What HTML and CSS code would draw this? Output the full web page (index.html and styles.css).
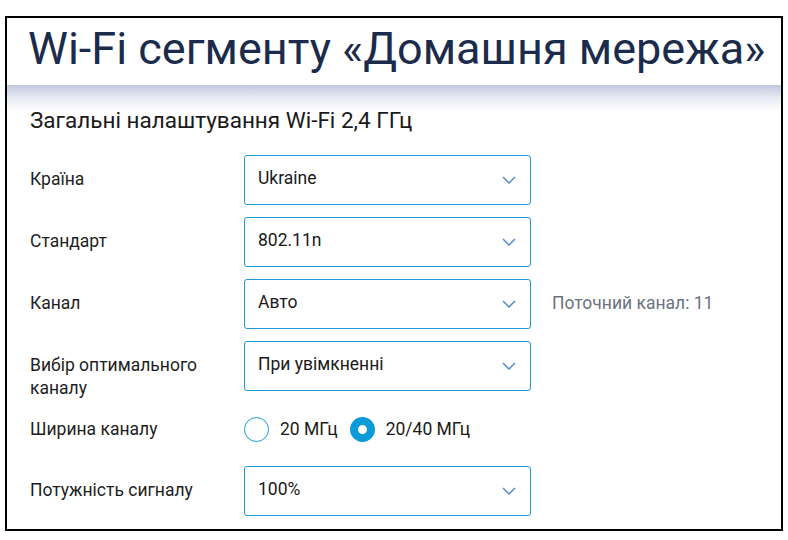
FILE: index.html
```html
<!DOCTYPE html>
<html lang="uk">
<head>
    <meta charset="UTF-8">
    <title>Wi-Fi сегменту «Домашня мережа»</title>
    <link rel="stylesheet" href="styles.css">
</head>
<body>
    <div class="frame">
        <header class="header">
            <h1>Wi-Fi сегменту «Домашня мережа»</h1>
        </header>

        <section class="settings">
            <h2>Загальні налаштування Wi-Fi 2,4 ГГц</h2>

            <div class="row">
                <div class="label">Країна</div>
                <div class="select">
                    <span>Ukraine</span>
                    <svg class="chevron" width="14" height="8" viewBox="0 0 14 8"><path d="M1 1l6 6 6-6" /></svg>
                </div>
            </div>

            <div class="row">
                <div class="label">Стандарт</div>
                <div class="select">
                    <span>802.11n</span>
                    <svg class="chevron" width="14" height="8" viewBox="0 0 14 8"><path d="M1 1l6 6 6-6" /></svg>
                </div>
            </div>

            <div class="row">
                <div class="label">Канал</div>
                <div class="select">
                    <span>Авто</span>
                    <svg class="chevron" width="14" height="8" viewBox="0 0 14 8"><path d="M1 1l6 6 6-6" /></svg>
                </div>
                <div class="hint">Поточний канал: 11</div>
            </div>

            <div class="row">
                <div class="label">Вибір оптимального каналу</div>
                <div class="select">
                    <span>При увімкненні</span>
                    <svg class="chevron" width="14" height="8" viewBox="0 0 14 8"><path d="M1 1l6 6 6-6" /></svg>
                </div>
            </div>

            <div class="row row-radio">
                <div class="label">Ширина каналу</div>
                <div class="radios">
                    <label class="radio"><span class="dot"></span>20 МГц</label>
                    <label class="radio checked"><span class="dot"></span>20/40 МГц</label>
                </div>
            </div>

            <div class="row">
                <div class="label">Потужність сигналу</div>
                <div class="select">
                    <span>100%</span>
                    <svg class="chevron" width="14" height="8" viewBox="0 0 14 8"><path d="M1 1l6 6 6-6" /></svg>
                </div>
            </div>
        </section>
    </div>
</body>
</html>
```

FILE: styles.css
```css
body { margin: 0; background: #fff; font-family: Roboto, "Noto Sans", sans-serif; color: #1c1c1c; }

.frame {
    margin: 16px 5px 0 5px; height: 511px;
    border: 2px solid #000; overflow: hidden; background: #fff;
}

.header { height: 67px; padding-left: 21px; }
.header h1 {
    margin: 0; font-size: 45px; font-weight: 400; line-height: 62px;
    color: #1b2b4b; white-space: nowrap;
}

.settings {
    padding: 22px 0 0 23px;
    background: linear-gradient(#c2c8dd 0, #e6e9f2 12px, #fff 26px) no-repeat;
}
.settings h2 { margin: 0 0 22px; font-size: 22.5px; font-weight: 400; line-height: 26px; color: #1a1a1a; }

.row { display: flex; align-items: flex-start; margin-bottom: 12px; }
.label { width: 214px; padding-top: 13px; font-size: 17.5px; line-height: 23px; color: #1e1e1e; }

.select {
    box-sizing: border-box; width: 287px; height: 50px;
    display: flex; align-items: center; justify-content: space-between;
    padding: 0 14px 0 13px;
    border: 1px solid #1b9bd7; border-radius: 3px;
    font-size: 17.5px; color: #1a1a1a;
}
.select span { margin-top: -5px; }
.chevron path { fill: none; stroke: #5d8fcc; stroke-width: 1.6; }

.hint { margin-left: 21px; padding-top: 13px; font-size: 17.5px; line-height: 23px; color: #6b7280; }

.row-radio { align-items: center; height: 36px; margin-top: -1px; margin-bottom: 19px; }
.row-radio .label { padding-top: 0; }
.radios { display: flex; align-items: center; gap: 12px; }
.radio { display: flex; align-items: center; gap: 11px; font-size: 17.5px; color: #1a1a1a; }
.dot {
    box-sizing: border-box; width: 25px; height: 25px; border-radius: 50%;
    border: 1.5px solid #1b9bd7; background: #fff;
}
.radio.checked .dot { border: 8px solid #0b9ad9; }
```
